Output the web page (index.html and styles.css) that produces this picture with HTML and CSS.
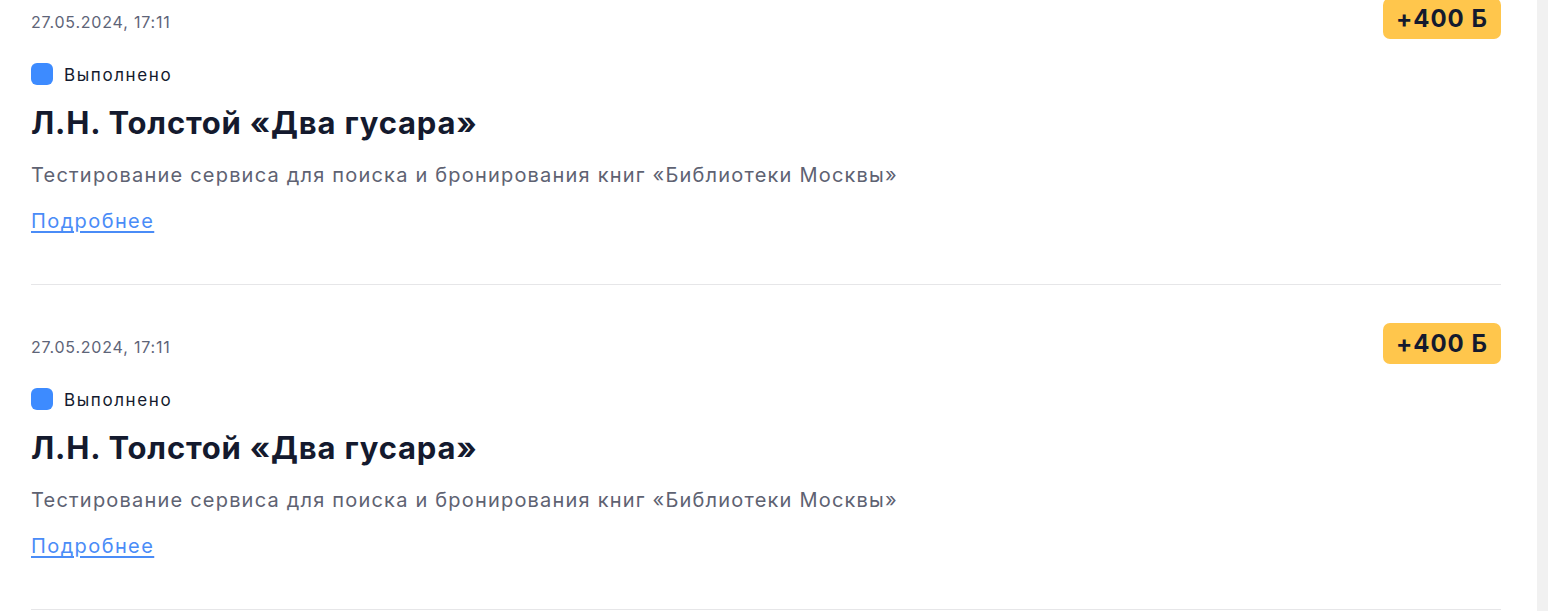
FILE: index.html
```html
<!DOCTYPE html>
<html lang="ru">
<head>
<meta charset="utf-8">
<title>История баллов</title>
<link rel="stylesheet" href="styles.css">
</head>
<body>
<div class="page">
  <main class="list">
    <article class="item">
      <div class="item-head">
        <span class="date">27.05.2024, 17:11</span>
        <span class="badge">+400 Б</span>
      </div>
      <div class="status"><span class="dot"></span><span class="status-text">Выполнено</span></div>
      <h2 class="title">Л.Н. Толстой «Два гусара»</h2>
      <p class="desc">Тестирование сервиса для поиска и бронирования книг «Библиотеки Москвы»</p>
      <a class="more" href="#">Подробнее</a>
    </article>
    <article class="item">
      <div class="item-head">
        <span class="date">27.05.2024, 17:11</span>
        <span class="badge">+400 Б</span>
      </div>
      <div class="status"><span class="dot"></span><span class="status-text">Выполнено</span></div>
      <h2 class="title">Л.Н. Толстой «Два гусара»</h2>
      <p class="desc">Тестирование сервиса для поиска и бронирования книг «Библиотеки Москвы»</p>
      <a class="more" href="#">Подробнее</a>
    </article>
  </main>
  <div class="scrollbar"></div>
</div>
</body>
</html>
```
FILE: styles.css
```css
* { box-sizing: border-box; }
html, body { margin: 0; padding: 0; height: 100%; overflow: hidden; background: #fff; }
body { font-family: "Inter", "Open Sans", sans-serif; }
.page { display: flex; height: 100vh; }
.list { flex: 1; padding: 0 36px 0 31px; margin-top: -40px; }
.scrollbar { width: 11px; flex: none; background: #f1f1f1; }
.item { display: flex; flex-direction: column; align-items: flex-start; padding: 38px 0 50px; border-bottom: 1px solid #e6e6e8; }
.item-head { display: flex; justify-content: space-between; align-items: center; width: 100%; height: 41px; }
.date { font-size: 16px; color: #5e6478; letter-spacing: 0.8px; padding-top: 7px; }
.badge { background: #ffc64c; color: #141a2e; font-weight: 700; font-size: 24px; height: 41px; line-height: 41px; padding: 0 13px; border-radius: 7px; letter-spacing: 1px; }
.status { display: flex; align-items: center; gap: 11px; height: 22px; margin-top: 24px; }
.dot { width: 22px; height: 22px; border-radius: 6px; background: #3d8bff; }
.status-text { font-size: 17px; color: #141a2e; letter-spacing: 1.6px; padding-top: 1px; }
.title { margin: 20px 0 0; font-size: 31px; line-height: 36px; font-weight: 700; color: #141a2e; letter-spacing: 0.8px; }
.desc { margin: 21px 0 0; font-size: 20px; line-height: 26px; color: #5e6272; letter-spacing: 1.2px; }
.more { margin-top: 20px; font-size: 20px; line-height: 26px; color: #4a8cf7; letter-spacing: 1.4px; text-decoration: underline; text-underline-offset: 3px; }
```
